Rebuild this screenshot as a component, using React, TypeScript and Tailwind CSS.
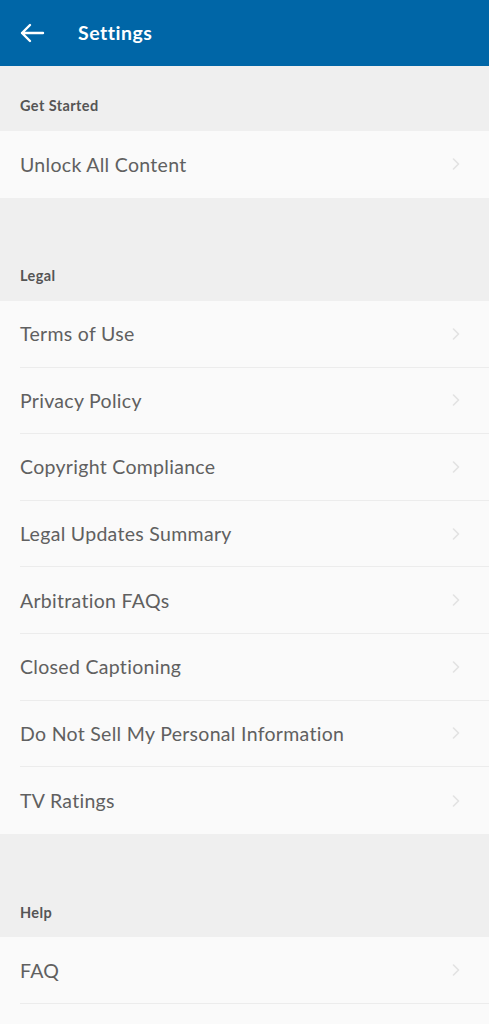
import React from 'react';

type Section = { title: string; items: string[]; gap?: boolean };

const sections: Section[] = [
  { title: 'Get Started', items: ['Unlock All Content'] },
  {
    title: 'Legal',
    gap: true,
    items: [
      'Terms of Use',
      'Privacy Policy',
      'Copyright Compliance',
      'Legal Updates Summary',
      'Arbitration FAQs',
      'Closed Captioning',
      'Do Not Sell My Personal Information',
      'TV Ratings',
    ],
  },
  { title: 'Help', gap: true, items: ['FAQ'] },
];

const Chevron = () => (
  <svg width="8" height="12" viewBox="0 0 8 12" fill="none" className="shrink-0">
    <path d="M1.5 1l5 5-5 5" stroke="#e2e2e2" strokeWidth="1.6" strokeLinecap="round" strokeLinejoin="round" />
  </svg>
);

export default function App() {
  return (
    <div className="h-[1024px] overflow-hidden bg-[#efefef] font-['Lato',sans-serif]">
      {/* Шапка */}
      <header className="h-[66px] bg-[#0066a7] flex items-center pl-[19px] pr-5 gap-[33px]">
        <svg width="26" height="20" viewBox="0 0 26 20" fill="none">
          <path d="M24 10H3M11 2L3 10l8 8" stroke="white" strokeWidth="2.4" strokeLinecap="round" strokeLinejoin="round" />
        </svg>
        <h1 className="text-white text-[19.5px] font-bold tracking-[0.5px]">Settings</h1>
      </header>

      {sections.map((s) => (
        <section key={s.title}>
          <div className={`${s.gap ? 'h-[103.5px]' : 'h-[65px]'} flex items-end px-5 pb-[14px]`}>
            <span className="text-[14.5px] font-bold text-[#555] tracking-[0.4px]">{s.title}</span>
          </div>
          <ul className="bg-[#fafafa]">
            {s.items.map((item, i) => (
              <li key={item} className="pl-5">
                <div
                  className={`h-[66.6px] flex items-center justify-between pr-[29px] ${
                    i < s.items.length - 1 || s.title === 'Help' ? 'border-b border-[#ececec]' : ''
                  }`}
                >
                  <span className="text-[19.5px] text-[#606060] tracking-[0.3px]">{item}</span>
                  <Chevron />
                </div>
              </li>
            ))}
          </ul>
          {s.title === 'Help' && <div className="h-[40px] bg-[#fafafa]" />}
        </section>
      ))}
    </div>
  );
}
